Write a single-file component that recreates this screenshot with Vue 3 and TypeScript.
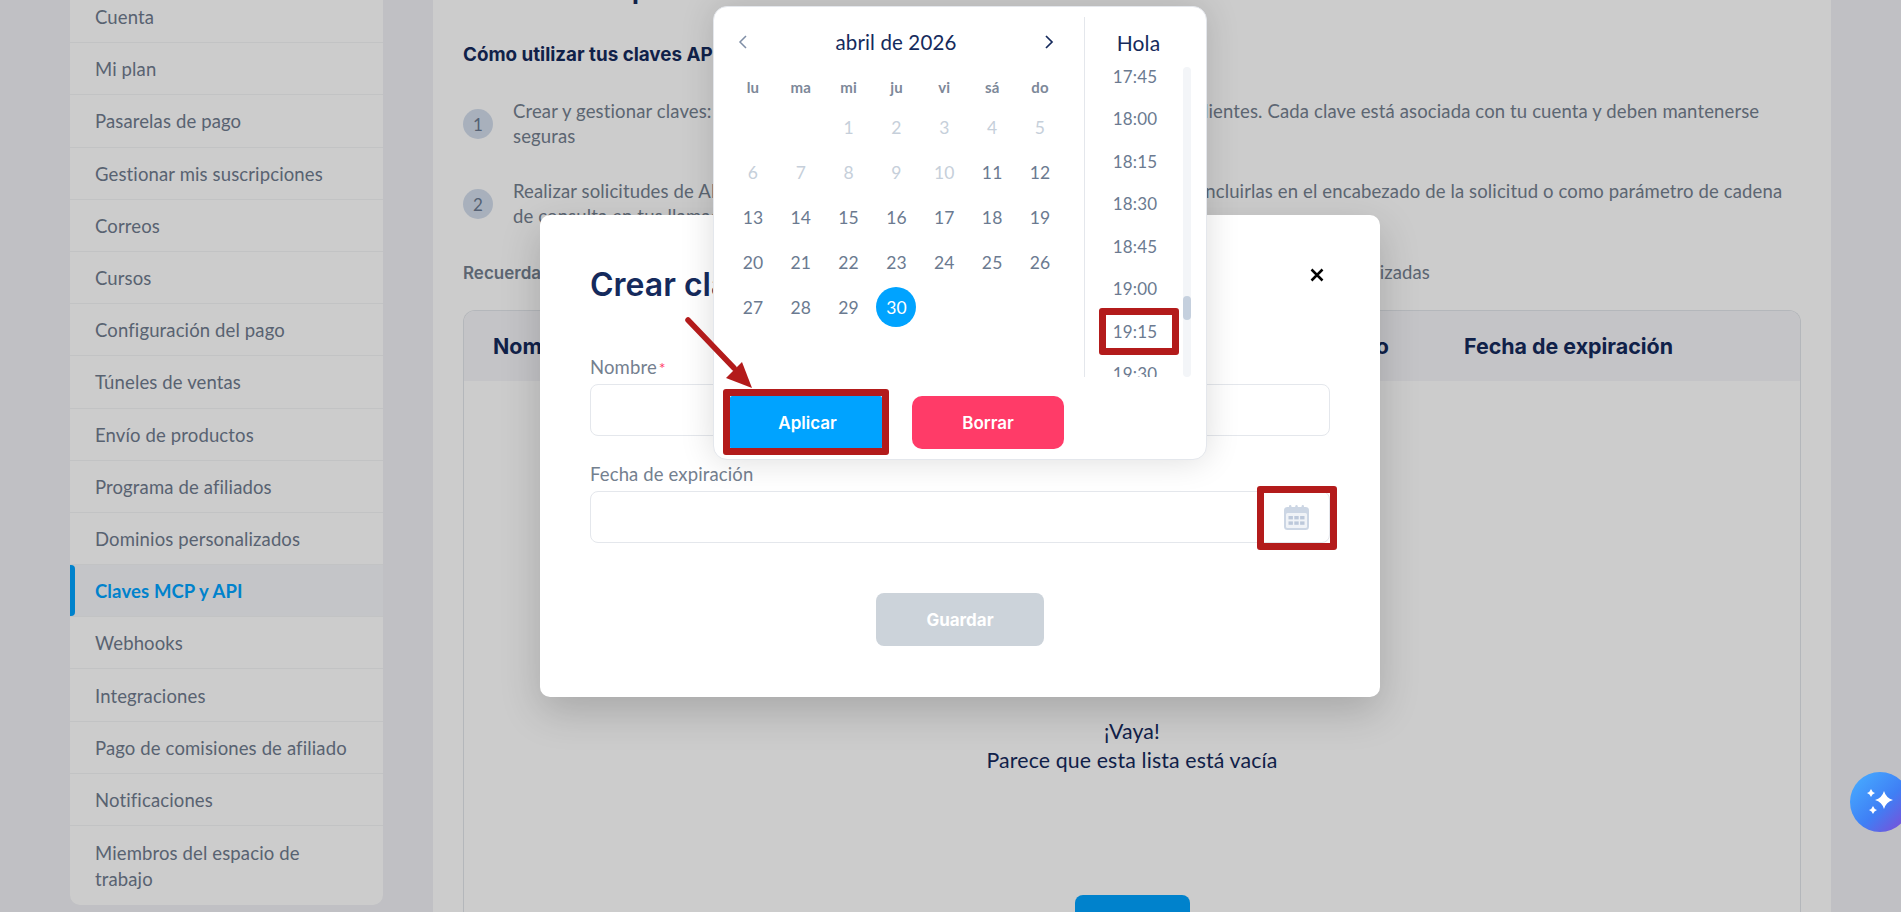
<script setup lang="ts">
const menu: string[] = [
  'Cuenta', 'Mi plan', 'Pasarelas de pago', 'Gestionar mis suscripciones', 'Correos', 'Cursos',
  'Configuración del pago', 'Túneles de ventas', 'Envío de productos', 'Programa de afiliados',
  'Dominios personalizados', 'Claves MCP y API', 'Webhooks', 'Integraciones',
  'Pago de comisiones de afiliado', 'Notificaciones', 'Miembros del espacio de trabajo',
]
const weekdays = ['lu', 'ma', 'mi', 'ju', 'vi', 'sá', 'do']
const blanks = [1, 2]
const days = Array.from({ length: 30 }, (_, i) => i + 1)
const times = ['17:45', '18:00', '18:15', '18:30', '18:45', '19:00', '19:15', '19:30']
</script>

<template>
  <div class="page">
    <aside class="sidebar">
      <a v-for="m in menu" :key="m" class="item" :class="{ active: m === 'Claves MCP y API' }">{{ m }}</a>
    </aside>
    <main class="panel">
      <h1 class="title">Claves MCP para API</h1>
      <h2 class="howto">Cómo utilizar tus claves API</h2>
      <div class="step">
        <span class="num">1</span>
        <p>Crear y gestionar claves: Puedes crear tus claves de API desde esta página para sus clientes. Cada clave está asociada con tu cuenta y deben mantenerse<br>seguras</p>
      </div>
      <div class="step">
        <span class="num">2</span>
        <p>Realizar solicitudes de API: Para autenticarte debes enviarlas en cada envío, puedes incluirlas en el encabezado de la solicitud o como parámetro de cadena<br>de consulta en tus llamadas</p>
      </div>
      <p class="remember"><b>Recuerda:</b> nunca compartas tus claves públicamente y borra las que sospeches que fueron expuestas o no autorizadas</p>
      <section class="table">
        <div class="thead">
          <span class="c1">Nombre</span>
          <span class="c2">Último uso</span>
          <span class="c3">Fecha de expiración</span>
        </div>
        <div class="empty">
          <p>¡Vaya!</p>
          <p>Parece que esta lista está vacía</p>
          <button class="create" type="button"></button>
        </div>
      </section>
    </main>

    <div class="overlay"></div>

    <div class="modal">
      <div class="modal-head">
        <h3>Crear clave de API</h3>
        <svg class="close" width="14" height="14" viewBox="0 0 14 14"><path d="M1.500 1.500l11 11M12.500 1.500l-11 11" stroke="#000" stroke-width="2.500" fill="none"/></svg>
      </div>
      <label class="lbl">Nombre<i>*</i></label>
      <div class="input"></div>
      <label class="lbl second">Fecha de expiración</label>
      <div class="input">
        <svg class="cal" width="25" height="25" viewBox="0 0 25 25">
          <rect x="0" y="2" width="25" height="23" rx="3.500" fill="#ccd6e4"/>
          <rect x="5" y="0" width="2.400" height="5" rx="1.200" fill="#ccd6e4"/>
          <rect x="11.300" y="0" width="2.400" height="5" rx="1.200" fill="#ccd6e4"/>
          <rect x="17.600" y="0" width="2.400" height="5" rx="1.200" fill="#ccd6e4"/>
          <rect x="2" y="8" width="21" height="15" rx="1.500" fill="#f0f3f7"/>
          <g fill="#bcc8da">
            <rect x="4.500" y="11" width="4.400" height="3.400"/><rect x="10.300" y="11" width="4.400" height="3.400"/><rect x="16.100" y="11" width="4.400" height="3.400"/>
            <rect x="4.500" y="16.400" width="4.400" height="3.400"/><rect x="10.300" y="16.400" width="4.400" height="3.400"/><rect x="16.100" y="16.400" width="4.400" height="3.400"/>
          </g>
        </svg>
      </div>
      <div class="modal-foot"><button class="save" type="button">Guardar</button></div>
    </div>

    <div class="picker">
      <div class="cal-col">
        <div class="cal-head">
          <svg width="10" height="16" viewBox="0 0 10 16"><path d="M8 2L2 8l6 6" stroke="#7f8ea6" stroke-width="1.500" fill="none"/></svg>
          <span>abril de 2026</span>
          <svg width="10" height="16" viewBox="0 0 10 16"><path d="M2 2l6 6-6 6" stroke="#152a5c" stroke-width="1.700" fill="none"/></svg>
        </div>
        <div class="grid weeks"><span v-for="w in weekdays" :key="w">{{ w }}</span></div>
        <div class="grid daysgrid">
          <span v-for="b in blanks" :key="'b' + b"></span>
          <span v-for="d in days" :key="d" :class="{ off: d < 11, sel: d === 30 }"><em>{{ d }}</em></span>
        </div>
      </div>
      <div class="time-col">
        <div class="time-head">Hola</div>
        <div class="time-list">
          <div class="time-inner"><span v-for="t in times" :key="t">{{ t }}</span></div>
          <div class="track"><div class="thumb"></div></div>
        </div>
      </div>
      <div class="actions">
        <button class="apply" type="button">Aplicar</button>
        <button class="clear" type="button">Borrar</button>
      </div>
    </div>

    <div class="mark m-time"></div>
    <div class="mark m-apply"></div>
    <div class="mark m-cal"></div>
    <svg class="arrow" width="90" height="90" viewBox="0 0 90 90">
      <path d="M4 4L50 52" stroke="#b31b1b" stroke-width="5.500" stroke-linecap="round" fill="none"/>
      <path d="M68 72L42 62 58 46Z" fill="#b31b1b"/>
    </svg>

    <div class="fab">
      <svg width="36" height="36" viewBox="0 0 36 36" fill="#fff">
        <path d="M22 7Q24 14 31 16 24 18 22 25 20 18 13 16 20 14 22 7Z"/>
        <path d="M9 5Q10 8 13 9 10 10 9 13 8 10 5 9 8 8 9 5Z"/>
        <path d="M11 22Q12 25 15 26 12 27 11 30 10 27 7 26 10 25 11 22Z"/>
      </svg>
    </div>
  </div>
</template>

<style>
html, body { margin: 0; overflow: hidden; }
</style>

<style scoped>
.page {
  position: relative; display: flex; width: 1901px; height: 912px; overflow: hidden;
  padding-left: 70px; box-sizing: border-box; background: #f0f1f5;
  font-family: Lato, "Noto Sans", sans-serif; color: #6b7a90; letter-spacing: .13px;
}
.sidebar {
  flex: none; width: 313px; height: 914px; margin-top: -9px; background: #fff;
  border-radius: 0 0 10px 10px; align-self: flex-start; overflow: hidden;
}
.item {
  display: flex; align-items: center; box-sizing: border-box; min-height: 52.2px; padding: 1px 25px 0;
  font-size: 18.500px; line-height: 26px; color: #6f7b8e; border-bottom: 1px solid #f3f4f6; position: relative;
}
.item:last-child { border-bottom: 0; padding: 13px 40px 12px 25px; min-height: 79px; }
.item.active { background: #f6f7fa; color: #00a3ff; font-weight: 700; }
.item.active::before {
  content: ""; position: absolute; left: 0; top: 0; bottom: 0; width: 5px; background: #00a3ff; border-radius: 0 4px 4px 0;
}
.panel {
  flex: none; box-sizing: border-box; width: 1398px; margin-left: 50px; padding: 0 30px; background: #fff; height: 912px; overflow: hidden;
}
.title { margin: -33px 0 0; font-size: 30px; line-height: 40px; color: #152a5c; font-weight: 700; white-space: nowrap; }
.howto { margin: 36px 0 0; font-family: Inter, sans-serif; font-size: 18.800px; line-height: 24px; color: #152a5c; font-weight: 700; letter-spacing: 0; }
.step { display: flex; align-items: center; gap: 20px; }
.howto + .step { margin-top: 32px; }
.step + .step { margin-top: 30px; }
.num {
  flex: none; width: 30px; height: 30px; border-radius: 50%; background: #d3ddec; display: flex;
  align-items: center; justify-content: center; font-size: 17px; color: #6b7a90;
}
.step p { margin: 0; font-size: 18.500px; line-height: 25px; color: #74808f; white-space: nowrap; }
.remember { margin: 31px 0 0; font-size: 18.500px; line-height: 25px; color: #74808f; white-space: nowrap; }
.remember b { font-family: Inter, sans-serif; font-size: 17px; font-weight: 600; letter-spacing: 0; }
.table { margin-top: 24px; border: 1px solid #e2e5ea; border-bottom: 0; border-radius: 12px 12px 0 0; height: 640px; box-sizing: border-box; overflow: hidden; }
.thead {
  height: 70px; background: #f5f6f9; font-family: Inter, sans-serif; font-weight: 700; letter-spacing: 0;
  font-size: 21.400px; color: #152a5c; display: flex; align-items: center; padding: 0 127px 0 29px;
}
.c1 { margin-right: auto; }
.c3 { margin-left: 75px; }
.empty { padding-top: 336px; display: flex; flex-direction: column; align-items: center; color: #152a5c; font-size: 21.300px; line-height: 29px; }
.empty p { margin: 0; }
.create { margin-top: 120px; width: 115px; height: 60px; border: 0; border-radius: 8px; background: #00a3ff; }
.overlay { position: absolute; inset: 0; background: rgba(0, 0, 0, .2); }
.modal {
  position: absolute; left: 540px; top: 215px; width: 840px; height: 482px; box-sizing: border-box; padding: 46px 50px 0;
  background: #fff; border-radius: 10px; box-shadow: 0 14px 40px rgba(0, 0, 0, .18);
}
.modal-head { display: flex; align-items: center; justify-content: space-between; height: 46px; }
.modal-head h3 { margin: 0; font-family: Inter, sans-serif; font-size: 32px; font-weight: 600; color: #152a5c; letter-spacing: 0; }
.close { margin-right: 6px; margin-top: -18px; }
.lbl { display: block; margin-top: 48px; height: 24px; font-size: 18.500px; line-height: 24px; color: #74808f; }
.lbl i { color: #ff3b68; font-style: normal; margin-left: 2px; font-size: 16px; }
.lbl.second { margin-top: 26px; }
.input { height: 52px; box-sizing: border-box; border: 1px solid #e4e7ec; border-radius: 8px; display: flex; align-items: center; justify-content: flex-end; padding-right: 20px; }
.lbl + .input { margin-top: 5px; }
.modal-foot { display: flex; justify-content: center; margin-top: 50px; }
.save { width: 168px; height: 53px; border: 0; border-radius: 8px; background: #ccd3da; color: #fff; font-family: Inter, sans-serif; font-weight: 700; font-size: 17px; }
.picker {
  position: absolute; left: 713px; top: 6px; width: 494px; height: 454px; box-sizing: border-box; background: #fff;
  border: 1px solid #e4e7ec; border-radius: 14px; box-shadow: 0 0 34px rgba(0, 0, 0, .14); display: grid;
  grid-template-columns: 370px 1fr; grid-template-rows: 360px 1fr; padding: 10px 0 0;
}
.cal-col { padding: 0 0 0 15px; }
.cal-head { display: flex; align-items: center; justify-content: space-between; height: 50px; padding: 0 30px 0 9px; color: #152a5c; }
.cal-head span { font-size: 20.500px; }
.grid { display: grid; grid-template-columns: repeat(7, 47.850px); justify-items: center; }
.weeks { margin-top: 6.500px; height: 26px; align-items: center; font-size: 15px; font-weight: 700; color: #7d8899; }
.daysgrid { grid-auto-rows: 45px; align-items: center; margin-top: 5px; font-size: 17.500px; color: #6b7a90; }
.daysgrid em { font-style: normal; display: flex; align-items: center; justify-content: center; width: 40px; height: 40px; border-radius: 50%; }
.daysgrid .off { color: #c6cfda; }
.daysgrid .sel em { background: #00a3ff; color: #fff; }
.time-col { border-left: 1px solid #e4e7ec; position: relative; }
.time-head { height: 50px; display: flex; align-items: center; justify-content: center; padding-right: 14px; font-size: 21px; color: #152a5c; }
.time-list { position: relative; height: 310px; overflow: hidden; }
.time-inner { display: flex; flex-direction: column; width: 100px; margin-top: -12px; }
.time-inner span { height: 42.500px; flex: none; display: flex; align-items: center; justify-content: center; font-size: 17px; color: #6b7a90; }
.track { position: absolute; right: 15px; top: 0; bottom: 0; width: 8px; border-radius: 4px; background: #f3f5f8; }
.thumb { position: absolute; top: 229px; width: 8px; height: 24px; border-radius: 4px; background: #c5d0de; }
.actions { grid-column: 1 / -1; display: flex; gap: 30px; padding: 19px 0 0 16px; }
.actions button { height: 53px; width: 152px; border: 0; color: #fff; font-family: Inter, sans-serif; font-weight: 600; font-size: 17px; border-radius: 10px; }
.actions .apply { background: #00a3ff; border-radius: 2px; padding-left: 9px; }
.clear { background: #ff3b68; }
.mark { position: absolute; box-sizing: border-box; border: 7px solid #b31b1b; border-radius: 3px; }
.m-time { left: 1099px; top: 308px; width: 80px; height: 47px; }
.m-apply { left: 723px; top: 389px; width: 166px; height: 66px; }
.m-cal { left: 1257px; top: 486px; width: 80px; height: 64px; }
.arrow { position: absolute; left: 684px; top: 316px; }
.fab {
  position: absolute; left: 1850px; top: 772px; width: 60px; height: 60px; border-radius: 50%;
  background: linear-gradient(135deg, #46a8ff 10%, #3f7ff5 55%, #7a4fd8 92%); display: flex; align-items: center; padding-left: 12px; box-sizing: border-box;
}
</style>
